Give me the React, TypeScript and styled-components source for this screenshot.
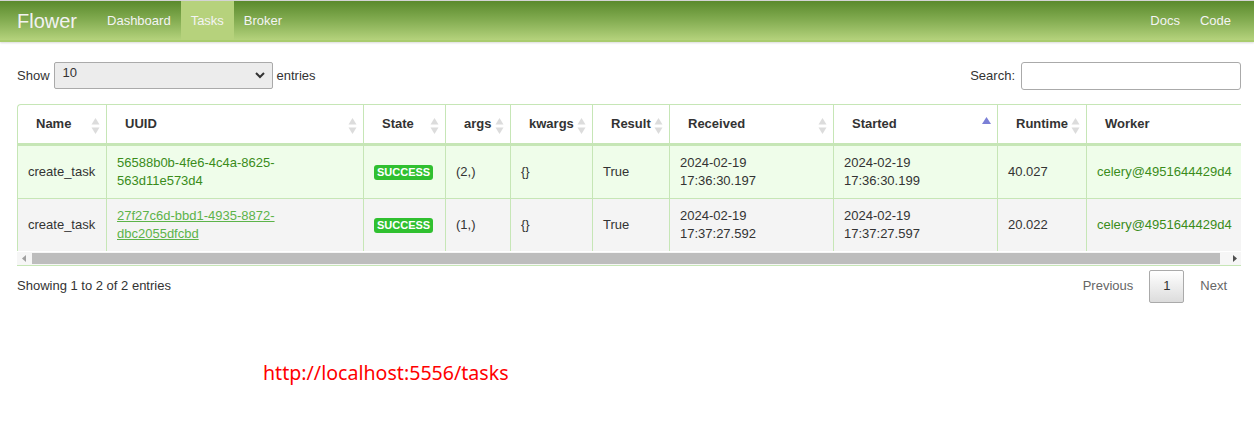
import React from "react";
import styled, { createGlobalStyle, css } from "styled-components";

const GlobalStyle = createGlobalStyle`
  html, body { margin: 0; padding: 0; background: #fff; }
  body {
    font-family: "Liberation Sans", Arial, sans-serif;
    font-size: 13px;
    line-height: 18px;
    color: #333;
  }
  * { box-sizing: border-box; }
`;

const Navbar = styled.nav`
  height: 42px;
  display: flex;
  align-items: stretch;
  justify-content: space-between;
  background: linear-gradient(to bottom, #5a8a2c 0%, #84ad52 50%, #b4d27c 100%);
  border-top: 1px solid #d4d4d4;
  border-bottom: 2px solid #a9cc6e;
  box-shadow: 0 1px 2px rgba(0, 0, 0, 0.15);
  padding: 0 13px 0 17px;
`;

const NavGroup = styled.div`
  display: flex;
  align-items: stretch;
`;

const Brand = styled.span`
  display: flex;
  align-items: center;
  font-size: 20px;
  color: #f2f2f2;
  margin-right: 20px;
`;

const NavLink = styled.a<{ $active?: boolean }>`
  display: flex;
  align-items: center;
  padding: 0 10px;
  color: #f4f4f4;
  font-size: 13px;
  text-decoration: none;
  ${(p) =>
    p.$active &&
    css`
      background: #b6d27c;
    `}
`;

const Content = styled.main`
  padding: 20px 13px 0 17px;
`;

const Controls = styled.div`
  display: flex;
  justify-content: space-between;
  align-items: center;
  height: 27px;
  margin-bottom: 15px;
`;

const Label = styled.label<{ $gap?: number }>`
  display: flex;
  align-items: center;
  gap: ${(p) => p.$gap ?? 4}px;
  color: #333;
`;

const SelectBox = styled.div`
  position: relative;
  width: 219px;
  height: 27px;
  border: 1px solid #aaa;
  border-radius: 2px;
  background: #ececec;
  padding: 2px 8px;
  font-size: 13px;
  line-height: 16px;
  color: #333;
  svg {
    position: absolute;
    right: 7px;
    top: 9px;
  }
`;

const SearchInput = styled.div`
  width: 220px;
  height: 28px;
  border: 1px solid #aaa;
  border-radius: 3px;
  background: #fff;
`;

const TableScroll = styled.div`
  overflow: hidden;
  border-bottom: 1px solid #c6e6b6;
`;

const Table = styled.table`
  width: 1240px;
  table-layout: fixed;
  border-collapse: separate;
  border-spacing: 0;
`;

const Th = styled.th<{ $first?: boolean }>`
  position: relative;
  height: 42px;
  padding: 0 18px 0 18px;
  text-align: left;
  font-weight: bold;
  color: #333;
  background: #fff;
  border-top: 1px solid #c6e6b6;
  border-left: 1px solid #c6e6b6;
  border-bottom: 3px solid #c6e6b6;
  white-space: nowrap;
  ${(p) =>
    p.$first &&
    css`
      border-top-left-radius: 4px;
    `}
`;

const SortIcon = styled.span`
  position: absolute;
  right: 6px;
  top: 12px;
  display: flex;
  flex-direction: column;
  gap: 2px;
`;

const Tr = styled.tr<{ $odd?: boolean }>`
  background: ${(p) => (p.$odd ? "#effdea" : "#f4f4f4")};
`;

const Td = styled.td`
  padding: 8px 10px;
  border-left: 1px solid #c6e6b6;
  border-bottom: 1px solid #c6e6b6;
  vertical-align: middle;
  color: #333;
`;

const LastTd = styled(Td)`
  border-bottom: none;
`;

const Link = styled.a<{ $hover?: boolean }>`
  color: ${(p) => (p.$hover ? "#5cb349" : "#3a8c1a")};
  text-decoration: ${(p) => (p.$hover ? "underline" : "none")};
`;

const Badge = styled.span`
  display: inline-block;
  padding: 0 3px;
  height: 15px;
  line-height: 15px;
  border-radius: 3px;
  background: #30c030;
  color: #fff;
  font-weight: bold;
  font-size: 11px;
`;

const Scrollbar = styled.div`
  display: flex;
  align-items: center;
  height: 13px;
  margin-top: 1px;
  background: #f6f6f6;
`;

const ScrollArrow = styled.div`
  width: 13px;
  height: 13px;
  display: flex;
  align-items: center;
  justify-content: center;
`;

const Thumb = styled.div`
  flex: 1;
  height: 11px;
  margin: 0 8px 0 2px;
  background: #bdbdbd;
`;

const Footer = styled.div`
  display: flex;
  justify-content: space-between;
  align-items: center;
  margin-top: 4px;
  height: 32px;
`;

const Pager = styled.div`
  display: flex;
  align-items: center;
  padding-right: 14px;
`;

const PageLink = styled.span<{ $last?: boolean }>`
  color: #666;
  padding: ${(p) => (p.$last ? "0 0 0 16px" : "0 16px")};
`;

const PageButton = styled.span`
  display: flex;
  align-items: center;
  justify-content: center;
  width: 35px;
  height: 33px;
  border: 1px solid #aaa;
  border-radius: 2px;
  background: linear-gradient(to bottom, #fff 0%, #dcdcdc 100%);
  color: #333;
`;

const Url = styled.div`
  margin: 59px 0 0 246px;
  font-family: "Noto Sans", "DejaVu Sans", sans-serif;
  font-size: 19.6px;
  line-height: 24px;
  color: #ff0000;
`;

const Arrows = ({ active }: { active?: boolean }) =>
  active ? (
    <SortIcon>
      <svg width="9" height="8" viewBox="0 0 9 8">
        <path d="M4.5 0 L9 7 L0 7 Z" fill="#7b80d6" />
      </svg>
    </SortIcon>
  ) : (
    <SortIcon>
      <svg width="9" height="18" viewBox="0 0 9 18">
        <path d="M4.5 1 L8.5 7.5 L0.5 7.5 Z" fill="#dcdcdc" />
        <path d="M4.5 17 L8.5 10.5 L0.5 10.5 Z" fill="#dcdcdc" />
      </svg>
    </SortIcon>
  );

const columns: { name: string; width: number; active?: boolean }[] = [
  { name: "Name", width: 89 },
  { name: "UUID", width: 257 },
  { name: "State", width: 82 },
  { name: "args", width: 65 },
  { name: "kwargs", width: 82 },
  { name: "Result", width: 77 },
  { name: "Received", width: 164 },
  { name: "Started", width: 164, active: true },
  { name: "Runtime", width: 89 },
  { name: "Worker", width: 171 },
];

const rows = [
  {
    uuid: ["56588b0b-4fe6-4c4a-8625-", "563d11e573d4"],
    args: "(2,)",
    received: ["2024-02-19", "17:36:30.197"],
    started: ["2024-02-19", "17:36:30.199"],
    runtime: "40.027",
  },
  {
    uuid: ["27f27c6d-bbd1-4935-8872-", "dbc2055dfcbd"],
    args: "(1,)",
    received: ["2024-02-19", "17:37:27.592"],
    started: ["2024-02-19", "17:37:27.597"],
    runtime: "20.022",
  },
];

export default function App() {
  return (
    <>
      <GlobalStyle />
      <Navbar>
        <NavGroup>
          <Brand>Flower</Brand>
          <NavLink>Dashboard</NavLink>
          <NavLink $active>Tasks</NavLink>
          <NavLink>Broker</NavLink>
        </NavGroup>
        <NavGroup>
          <NavLink>Docs</NavLink>
          <NavLink>Code</NavLink>
        </NavGroup>
      </Navbar>
      <Content>
        <Controls>
          <Label>
            Show
            <SelectBox>
              10
              <svg width="10" height="7" viewBox="0 0 10 7">
                <path d="M1 1 L5 5 L9 1" fill="none" stroke="#333" strokeWidth="2" />
              </svg>
            </SelectBox>
            entries
          </Label>
          <Label $gap={6}>
            Search:
            <SearchInput />
          </Label>
        </Controls>
        <TableScroll>
          <Table>
            <colgroup>
              {columns.map((c) => (
                <col key={c.name} style={{ width: c.width }} />
              ))}
            </colgroup>
            <thead>
              <tr>
                {columns.map((c, i) => (
                  <Th key={c.name} $first={i === 0}>
                    {c.name}
                    <Arrows active={c.active} />
                  </Th>
                ))}
              </tr>
            </thead>
            <tbody>
              {rows.map((r, i) => {
                const Cell = i === rows.length - 1 ? LastTd : Td;
                return (
                  <Tr key={i} $odd={i === 0}>
                    <Cell>create_task</Cell>
                    <Cell>
                      <Link $hover={i === 1}>
                        {r.uuid[0]}
                        <br />
                        {r.uuid[1]}
                      </Link>
                    </Cell>
                    <Cell>
                      <Badge>SUCCESS</Badge>
                    </Cell>
                    <Cell>{r.args}</Cell>
                    <Cell>{"{}"}</Cell>
                    <Cell>True</Cell>
                    <Cell>
                      {r.received[0]}
                      <br />
                      {r.received[1]}
                    </Cell>
                    <Cell>
                      {r.started[0]}
                      <br />
                      {r.started[1]}
                    </Cell>
                    <Cell>{r.runtime}</Cell>
                    <Cell>
                      <Link>celery@4951644429d4</Link>
                    </Cell>
                  </Tr>
                );
              })}
            </tbody>
          </Table>
          <Scrollbar>
            <ScrollArrow>
              <svg width="4" height="7" viewBox="0 0 4 7">
                <path d="M4 0 L0 3.5 L4 7 Z" fill="#a0a0a0" />
              </svg>
            </ScrollArrow>
            <Thumb />
            <ScrollArrow>
              <svg width="4" height="7" viewBox="0 0 4 7">
                <path d="M0 0 L4 3.5 L0 7 Z" fill="#505050" />
              </svg>
            </ScrollArrow>
          </Scrollbar>
        </TableScroll>
        <Footer>
          <span>Showing 1 to 2 of 2 entries</span>
          <Pager>
            <PageLink>Previous</PageLink>
            <PageButton>1</PageButton>
            <PageLink $last>Next</PageLink>
          </Pager>
        </Footer>
        <Url>http://localhost:5556/tasks</Url>
      </Content>
    </>
  );
}
